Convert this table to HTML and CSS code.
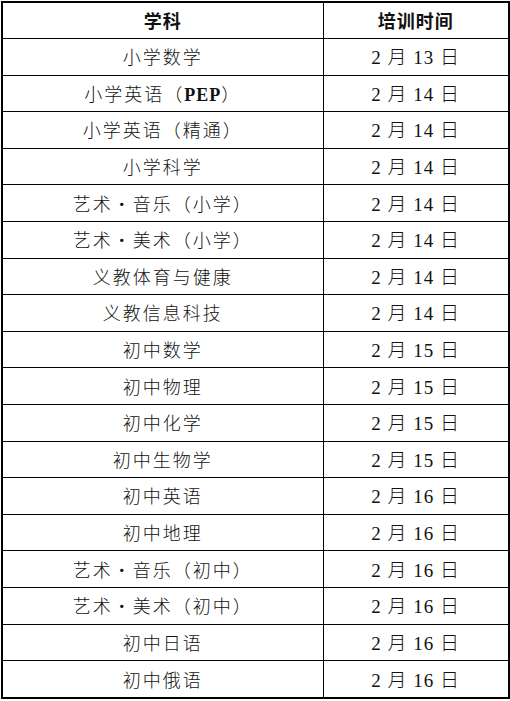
FILE: index.html
```html
<!DOCTYPE html>
<html lang="zh">
<head>
<meta charset="utf-8">
<link rel="stylesheet" href="styles.css">
</head>
<body>
<table class="schedule">
<colgroup><col class="col-subject"><col class="col-date"></colgroup>
<thead>
<tr><th>学科</th><th>培训时间</th></tr>
</thead>
<tbody>
<tr><td>小学数学</td><td class="date">2 月 13 日</td></tr>
<tr><td>小学英语（<span class="latin">PEP</span>）</td><td class="date">2 月 14 日</td></tr>
<tr><td>小学英语（精通）</td><td class="date">2 月 14 日</td></tr>
<tr><td>小学科学</td><td class="date">2 月 14 日</td></tr>
<tr><td>艺术・音乐（小学）</td><td class="date">2 月 14 日</td></tr>
<tr><td>艺术・美术（小学）</td><td class="date">2 月 14 日</td></tr>
<tr><td>义教体育与健康</td><td class="date">2 月 14 日</td></tr>
<tr><td>义教信息科技</td><td class="date">2 月 14 日</td></tr>
<tr><td>初中数学</td><td class="date">2 月 15 日</td></tr>
<tr><td>初中物理</td><td class="date">2 月 15 日</td></tr>
<tr><td>初中化学</td><td class="date">2 月 15 日</td></tr>
<tr><td>初中生物学</td><td class="date">2 月 15 日</td></tr>
<tr><td>初中英语</td><td class="date">2 月 16 日</td></tr>
<tr><td>初中地理</td><td class="date">2 月 16 日</td></tr>
<tr><td>艺术・音乐（初中）</td><td class="date">2 月 16 日</td></tr>
<tr><td>艺术・美术（初中）</td><td class="date">2 月 16 日</td></tr>
<tr><td>初中日语</td><td class="date">2 月 16 日</td></tr>
<tr><td>初中俄语</td><td class="date">2 月 16 日</td></tr>
</tbody>
</table>
</body>
</html>
```
FILE: styles.css
```css
html, body {
  margin: 0;
  padding: 0;
  background: #fff;
}
body {
  padding: 1px 1px;
  font-family: "Liberation Serif", "Noto Sans CJK SC", serif;
  color: #111;
}
.schedule {
  width: 507px;
  height: 698px;
  border-collapse: collapse;
  table-layout: fixed;
  border: 2px solid #000;
}
.col-subject { width: 321px; }
.col-date { width: 186px; }
.schedule th,
.schedule td {
  border: 1px solid #000;
  text-align: center;
  vertical-align: middle;
  padding: 3px 0 0 0;
  height: 30px;
  font-size: 18px;
  line-height: 20px;
  letter-spacing: 2px;
  font-weight: 300;
  white-space: nowrap;
}
.schedule th {
  font-weight: 700;
  letter-spacing: 1px;
  height: 32px;
}
.schedule td.date {
  letter-spacing: 1px;
  font-size: 19px;
}
.latin {
  font-weight: 700;
  letter-spacing: 1px;
}
```
